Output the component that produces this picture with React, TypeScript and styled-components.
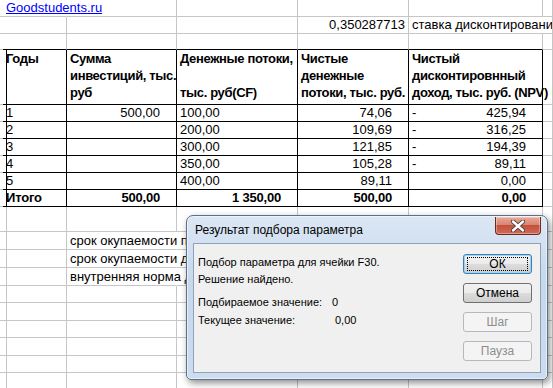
import React from "react";
import styled, { createGlobalStyle, css } from "styled-components";

const GlobalStyle = createGlobalStyle`
  html, body {
    margin: 0;
    padding: 0;
    background: #ffffff;
    overflow: hidden;
  }
  body {
    font-family: "Liberation Sans", Arial, sans-serif;
    font-size: 13px;
    color: #000000;
  }
`;

type Line = "g" | "k" | "n";

const lineColor = (l?: Line) =>
  l === "k" ? "#000000" : l === "n" ? "transparent" : "#c6c6c6";

const Page = styled.div`
  position: relative;
  width: 553px;
  height: 388px;
  overflow: hidden;
`;

const Sheet = styled.div`
  display: flex;
  flex-direction: column;
`;

const Row = styled.div<{ $h: number }>`
  display: grid;
  grid-template-columns: 3px 64px 110px 121px 111px 134px 1fr;
  height: ${(p) => p.$h}px;
`;

const Cell = styled.div<{
  $r?: Line;
  $b?: Line;
  $right?: boolean;
  $pad?: number;
  $bold?: boolean;
  $top?: boolean;
}>`
  box-sizing: border-box;
  min-width: 0;
  border-right: 1px solid ${(p) => lineColor(p.$r)};
  border-bottom: 1px solid ${(p) => lineColor(p.$b)};
  padding: 0 3px;
  white-space: nowrap;
  line-height: 16px;
  display: flex;
  align-items: ${(p) => (p.$top ? "flex-start" : "flex-end")};
  justify-content: ${(p) => (p.$right ? "flex-end" : "flex-start")};
  font-weight: ${(p) => (p.$bold ? 700 : 400)};
  ${(p) =>
    p.$bold &&
    css`
      letter-spacing: -0.2px;
    `}
  ${(p) =>
    p.$right &&
    css`
      padding-right: ${p.$pad ?? 16}px;
    `}
`;

const HeadText = styled.div`
  line-height: 17px;
  font-weight: 700;
  letter-spacing: -0.35px;
  white-space: nowrap;
`;

const NpvCell = styled(Cell)`
  justify-content: space-between;
`;

const Link = styled.span`
  color: #0000ff;
  text-decoration: underline;
`;

/* ---------- dialog ---------- */

const Dialog = styled.div`
  position: absolute;
  left: 186px;
  top: 215px;
  width: 362px;
  height: 165px;
  box-sizing: border-box;
  border: 1px solid #5d7089;
  border-radius: 7px 7px 5px 5px;
  background: linear-gradient(#dce7f4, #c6d8ec 40%, #cddcee);
  box-shadow: inset 0 0 0 1px rgba(255, 255, 255, 0.55),
    2px 3px 7px rgba(0, 0, 0, 0.45);
  display: flex;
  flex-direction: column;
  padding: 0 6px 6px 6px;
  font-family: "Liberation Sans", Tahoma, sans-serif;
`;

const TitleBar = styled.div`
  height: 27px;
  display: flex;
  justify-content: space-between;
  align-items: center;
  padding-left: 2px;
  font-size: 12px;
  color: #000000;
`;

const CloseButton = styled.div`
  align-self: flex-start;
  margin-top: 1px;
  width: 46px;
  height: 18px;
  box-sizing: border-box;
  border: 1px solid #6e2a20;
  border-top: none;
  border-radius: 0 0 4px 4px;
  background: linear-gradient(#e8a998, #d98672 45%, #c4503c 50%, #d06a57);
  display: flex;
  align-items: center;
  justify-content: center;
  box-shadow: inset 0 0 0 1px rgba(255, 255, 255, 0.35);
`;

const Client = styled.div`
  flex: 1;
  background: #f0f0f0;
  border: 1px solid #8fa2ba;
  display: flex;
  justify-content: space-between;
  padding: 10px 8px 0 4px;
  font-size: 11px;
`;

const Messages = styled.div`
  display: flex;
  flex-direction: column;
`;

const Msg = styled.div`
  line-height: 17px;
`;

const Field = styled.div<{ $gap?: number }>`
  display: grid;
  grid-template-columns: 134px auto;
  line-height: 17px;
  margin-top: ${(p) => p.$gap ?? 0}px;
`;

const Value = styled.span<{ $shift?: number }>`
  padding-left: ${(p) => p.$shift ?? 0}px;
`;

const Buttons = styled.div`
  display: flex;
  flex-direction: column;
  gap: 9px;
`;

const Button = styled.div<{ $default?: boolean; $disabled?: boolean }>`
  width: 69px;
  height: 20px;
  box-sizing: border-box;
  border: 1px solid #707070;
  border-radius: 3px;
  background: linear-gradient(#f2f2f2, #ebebeb 50%, #dddddd 50%, #cfcfcf);
  display: flex;
  align-items: center;
  justify-content: center;
  font-size: 12px;
  color: #000000;
  ${(p) =>
    p.$default &&
    css`
      border-color: #3c7fb1;
      box-shadow: inset 0 0 0 1px #9cd4f5;
    `}
  ${(p) =>
    p.$disabled &&
    css`
      border-color: #b5b9bd;
      background: #f4f4f4;
      color: #8d8d8d;
    `}
`;

const Focus = styled.span`
  box-sizing: border-box;
  width: 61px;
  height: 14px;
  border: 1px dotted #000000;
  display: flex;
  align-items: center;
  justify-content: center;
`;

function CloseGlyph() {
  return (
    <svg width="14" height="12" viewBox="0 0 14 12">
      <path
        d="M2 1.5 L12 10.5 M12 1.5 L2 10.5"
        stroke="#3d3d3d"
        strokeWidth="4.2"
        strokeLinecap="round"
      />
      <path
        d="M2 1.5 L12 10.5 M12 1.5 L2 10.5"
        stroke="#ffffff"
        strokeWidth="2.4"
        strokeLinecap="round"
      />
    </svg>
  );
}

function EmptyRow({ h }: { h: number }) {
  return (
    <Row $h={h}>
      <Cell />
      <Cell />
      <Cell />
      <Cell />
      <Cell />
      <Cell />
      <Cell />
    </Row>
  );
}

type DataRow = {
  year: string;
  invest?: string;
  flow?: string;
  net: string;
  npv: string;
  dash?: boolean;
};

const rows: DataRow[] = [
  { year: "1", invest: "500,00", flow: "100,00", net: "74,06", npv: "425,94", dash: true },
  { year: "2", flow: "200,00", net: "109,69", npv: "316,25", dash: true },
  { year: "3", flow: "300,00", net: "121,85", npv: "194,39", dash: true },
  { year: "4", flow: "350,00", net: "105,28", npv: "89,11", dash: true },
  { year: "5", flow: "400,00", net: "89,11", npv: "0,00" },
];

function NoteRow({ text, h }: { text: string; h: number }) {
  return (
    <Row $h={h}>
      <Cell />
      <Cell />
      <Cell $r="n">{text}</Cell>
      <Cell $r="n" />
      <Cell />
      <Cell />
      <Cell />
    </Row>
  );
}

export default function App() {
  return (
    <Page>
      <GlobalStyle />
      <Sheet>
        <Row $h={17}>
          <Cell $r="n" />
          <Cell $r="n">
            <Link>Goodstudents.ru</Link>
          </Cell>
          <Cell />
          <Cell />
          <Cell />
          <Cell />
          <Cell />
        </Row>
        <Row $h={16}>
          <Cell $r="n" />
          <Cell />
          <Cell />
          <Cell />
          <Cell $right $pad={3}>
            0,350287713
          </Cell>
          <Cell $r="n">ставка дисконтирования</Cell>
          <Cell />
        </Row>
        <Row $h={17}>
          <Cell $r="n" />
          <Cell $b="k" />
          <Cell $b="k" />
          <Cell $b="k" />
          <Cell $b="k" />
          <Cell $b="k" />
          <Cell />
        </Row>
        <Row $h={55}>
          <Cell $r="k" />
          <Cell $r="k" $b="k" $top>
            <HeadText>Годы</HeadText>
          </Cell>
          <Cell $r="k" $b="k" $top>
            <HeadText>
              Сумма
              <br />
              инвестиций, тыс.
              <br />
              руб
            </HeadText>
          </Cell>
          <Cell $r="k" $b="k" $top>
            <HeadText>
              Денежные потоки,
              <br />
              &nbsp;
              <br />
              тыс. руб(CF)
            </HeadText>
          </Cell>
          <Cell $r="k" $b="k" $top>
            <HeadText>
              Чистые
              <br />
              денежные
              <br />
              потоки, тыс. руб.
            </HeadText>
          </Cell>
          <Cell $r="k" $b="k" $top>
            <HeadText>
              Чистый
              <br />
              дисконтировнный
              <br />
              доход, тыс. руб. (NPV)
            </HeadText>
          </Cell>
          <Cell />
        </Row>
        {rows.map((r) => (
          <Row $h={17} key={r.year}>
            <Cell $r="k" />
            <Cell $r="k" $b="k">
              {r.year}
            </Cell>
            <Cell $r="k" $b="k" $right>
              {r.invest}
            </Cell>
            <Cell $r="k" $b="k">
              {r.flow}
            </Cell>
            <Cell $r="k" $b="k" $right>
              {r.net}
            </Cell>
            <NpvCell $r="k" $b="k" $right>
              <span>{r.dash ? "-" : ""}</span>
              <span>{r.npv}</span>
            </NpvCell>
            <Cell />
          </Row>
        ))}
        <Row $h={17}>
          <Cell $r="k" />
          <Cell $r="k" $b="k" $bold>
            Итого
          </Cell>
          <Cell $r="k" $b="k" $right $bold>
            500,00
          </Cell>
          <Cell $r="k" $b="k" $right $bold>
            1 350,00
          </Cell>
          <Cell $r="k" $b="k" $right $bold>
            500,00
          </Cell>
          <Cell $r="k" $b="k" $right $bold>
            0,00
          </Cell>
          <Cell />
        </Row>
        <EmptyRow h={25} />
        <NoteRow h={18} text="срок окупаемости проекта" />
        <NoteRow h={18} text="срок окупаемости дисконтированный" />
        <NoteRow h={18} text="внутренняя норма доходности" />
        <EmptyRow h={17} />
        <EmptyRow h={18} />
        <EmptyRow h={17} />
        <EmptyRow h={18} />
        <EmptyRow h={17} />
        <EmptyRow h={18} />
      </Sheet>

      <Dialog>
        <TitleBar>
          <span>Результат подбора параметра</span>
          <CloseButton>
            <CloseGlyph />
          </CloseButton>
        </TitleBar>
        <Client>
          <Messages>
            <Msg>Подбор параметра для ячейки F30.</Msg>
            <Msg>Решение найдено.</Msg>
            <Field $gap={6}>
              <span>Подбираемое значение:</span>
              <Value>0</Value>
            </Field>
            <Field $gap={1}>
              <span>Текущее значение:</span>
              <Value $shift={3}>0,00</Value>
            </Field>
          </Messages>
          <Buttons>
            <Button $default>
              <Focus>ОК</Focus>
            </Button>
            <Button>Отмена</Button>
            <Button $disabled>Шаг</Button>
            <Button $disabled>Пауза</Button>
          </Buttons>
        </Client>
      </Dialog>
    </Page>
  );
}
